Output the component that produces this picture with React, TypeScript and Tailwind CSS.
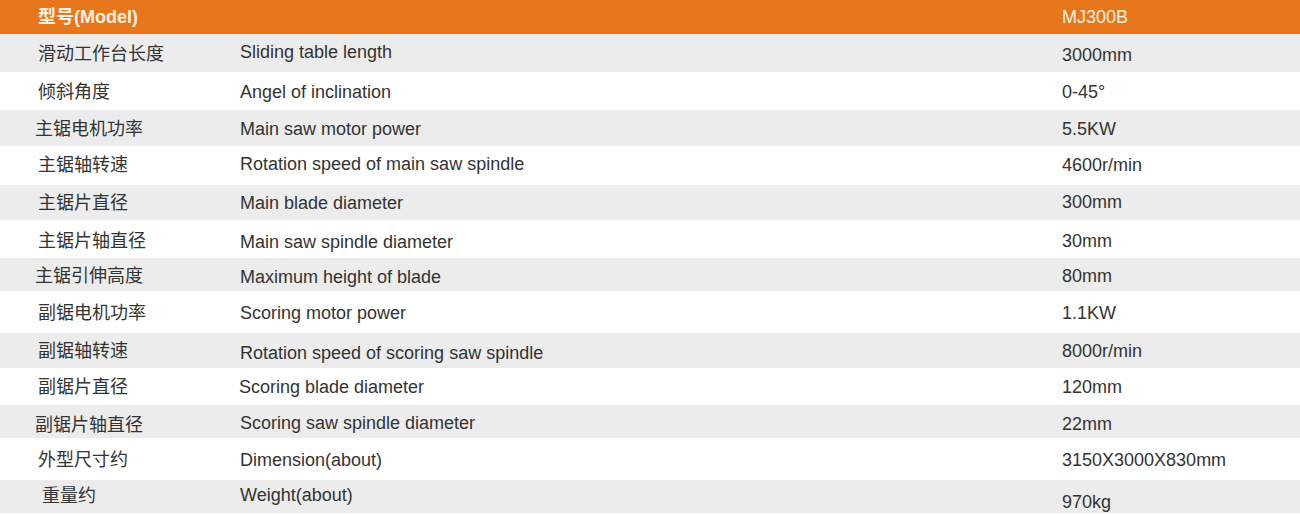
import React from 'react';

type Row = {
  cn: string;
  en: string;
  val: string;
  h: string;
  cnCls?: string;
  enCls?: string;
  valCls?: string;
};

const rows: Row[] = [
  { cn: '滑动工作台长度', en: 'Sliding table length', val: '3000mm', h: 'h-[38px]', enCls: '-translate-y-[2px]', valCls: 'translate-y-[1px]' },
  { cn: '倾斜角度', en: 'Angel of inclination', val: '0-45°', h: 'h-[38px]' },
  { cn: '主锯电机功率', en: 'Main saw motor power', val: '5.5KW', h: 'h-[36px]', cnCls: 'pl-[35px]' },
  { cn: '主锯轴转速', en: 'Rotation speed of main saw spindle', val: '4600r/min', h: 'h-[39px]', enCls: '-translate-y-[2px]', cnCls: 'pl-[38px] -translate-y-[1px]', valCls: '-translate-y-[1px]' },
  { cn: '主锯片直径', en: 'Main blade diameter', val: '300mm', h: 'h-[35px]', valCls: '-translate-y-[1px]' },
  { cn: '主锯片轴直径', en: 'Main saw spindle diameter', val: '30mm', h: 'h-[38px]', enCls: 'translate-y-[2px]', cnCls: 'pl-[38px] translate-y-[1px]', valCls: 'translate-y-[1px]' },
  { cn: '主锯引伸高度', en: 'Maximum height of blade', val: '80mm', h: 'h-[33px]', cnCls: 'pl-[35px] translate-y-[1px]', enCls: 'translate-y-[2px]', valCls: 'translate-y-[1px]' },
  { cn: '副锯电机功率', en: 'Scoring motor power', val: '1.1KW', h: 'h-[42px]' },
  { cn: '副锯轴转速', en: 'Rotation speed of scoring saw spindle', val: '8000r/min', h: 'h-[35px]', enCls: 'translate-y-[2px]' },
  { cn: '副锯片直径', en: 'Scoring blade diameter', val: '120mm', h: 'h-[37px]', enCls: '-ml-px' },
  { cn: '副锯片轴直径', en: 'Scoring saw spindle diameter', val: '22mm', h: 'h-[33px]', cnCls: 'pl-[35px] translate-y-[3px]', enCls: 'translate-y-[1px]', valCls: 'translate-y-[2px]' },
  { cn: '外型尺寸约', en: 'Dimension(about)', val: '3150X3000X830mm', h: 'h-[42px]' },
  { cn: '重量约', en: 'Weight(about)', val: '970kg', h: 'h-[33px]', cnCls: 'pl-[42px] -translate-y-[1px]', enCls: '-translate-y-[2px]', valCls: 'translate-y-[5px]' },
];

export default function App() {
  return (
    <div className="w-[1300px] h-[515px] bg-white text-[18px] text-[#333333] font-['Liberation_Sans','Noto_Sans_CJK_SC',sans-serif] overflow-hidden">
      <div className="h-[34px] bg-[#e8771b] flex items-center text-[#fdf0e2]">
        <div className="w-[240px] pl-[38px] font-bold">型号(Model)</div>
        <div className="flex-1" />
        <div className="w-[238px]">MJ300B</div>
      </div>
      {rows.map((r, i) => (
        <div
          key={r.cn}
          className={`flex items-center pt-[2px] ${r.h} ${i % 2 === 0 ? 'bg-[#ececec]' : 'bg-white'}`}
        >
          <div className={`w-[240px] ${r.cnCls ?? 'pl-[38px]'}`}>{r.cn}</div>
          <div className={`flex-1 ${r.enCls ?? ''}`}>{r.en}</div>
          <div className={`w-[238px] ${r.valCls ?? ''}`}>{r.val}</div>
        </div>
      ))}
    </div>
  );
}
